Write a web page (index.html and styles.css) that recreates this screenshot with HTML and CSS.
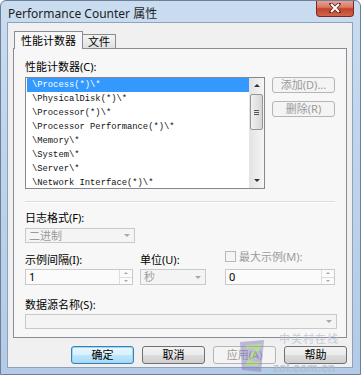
FILE: index.html
```html
<!DOCTYPE html>
<html lang="zh-CN">
<head>
    <meta charset="UTF-8">
    <title>Performance Counter 属性</title>
    <link rel="stylesheet" href="styles.css">
</head>
<body>
<div class="window">
    <!-- Title bar -->
    <div class="titlebar">
        <span class="title">Performance Counter 属性</span>
        <div class="close-btn">
            <svg width="14" height="10" viewBox="0 0 14 10">
                <path d="M3 1 L11 9 M11 1 L3 9" stroke="#5a1a10" stroke-width="3.4" stroke-linecap="round"/>
                <path d="M3 1 L11 9 M11 1 L3 9" stroke="#fff" stroke-width="2"/>
            </svg>
        </div>
    </div>

    <div class="client">
        <!-- Tabs -->
        <div class="tabs">
            <div class="tab active">性能计数器</div>
            <div class="tab">文件</div>
        </div>

        <div class="panel">
            <div class="label">性能计数器(<u>C</u>):</div>
            <div class="counter-row">
                <div class="listbox">
                    <ul class="items">
                        <li class="selected">\Process(*)\*</li>
                        <li>\PhysicalDisk(*)\*</li>
                        <li>\Processor(*)\*</li>
                        <li>\Processor Performance(*)\*</li>
                        <li>\Memory\*</li>
                        <li>\System\*</li>
                        <li>\Server\*</li>
                        <li>\Network Interface(*)\*</li>
                    </ul>
                    <div class="scrollbar">
                        <div class="sb-arrow"><span class="tri up"></span></div>
                        <div class="sb-track">
                            <div class="sb-thumb"><span class="grip"></span></div>
                        </div>
                        <div class="sb-arrow"><span class="tri down"></span></div>
                    </div>
                </div>
                <div class="side-buttons">
                    <div class="btn disabled">添加(D)...</div>
                    <div class="btn disabled">删除(R)</div>
                </div>
            </div>

            <div class="separator"></div>

            <div class="label">日志格式(<u>F</u>):</div>
            <div class="combo disabled format-combo">
                <span class="value">二进制</span>
                <span class="drop"><span class="tri down light"></span></span>
            </div>

            <div class="options">
                <div class="label">示例间隔(<u>I</u>):</div>
                <div class="label">单位(<u>U</u>):</div>
                <div class="label check-label"><span class="checkbox"></span><span>最大示例(<u>M</u>):</span></div>

                <div class="spinner">
                    <span class="value">1</span>
                    <span class="spin">
                        <span class="spin-btn"><span class="tri up tiny light"></span></span>
                        <span class="spin-btn"><span class="tri down tiny light"></span></span>
                    </span>
                </div>
                <div class="combo disabled">
                    <span class="value">秒</span>
                    <span class="drop"><span class="tri down light"></span></span>
                </div>
                <div class="spinner">
                    <span class="value">0</span>
                    <span class="spin">
                        <span class="spin-btn"><span class="tri up tiny light"></span></span>
                        <span class="spin-btn"><span class="tri down tiny light"></span></span>
                    </span>
                </div>
            </div>

            <div class="label source-label">数据源名称(<u>S</u>):</div>
            <div class="combo disabled source-combo">
                <span class="value"></span>
                <span class="drop"><span class="tri down light"></span></span>
            </div>
        </div>

        <!-- Dialog buttons -->
        <div class="footer">
            <div class="btn default">确定</div>
            <div class="btn">取消</div>
            <div class="btn disabled">应用(<u>A</u>)</div>
            <div class="btn">帮助</div>
        </div>
    </div>

    <!-- zol watermark -->
    <svg class="wm-logo" width="24" height="32" viewBox="0 0 24 32">
        <polygon points="0,2 24,0 21,32 2,30" fill="#8a7fc0"/>
        <path d="M6 7 L19 6 L8 24 L19 24" stroke="#7fc24a" stroke-width="4" fill="none"/>
    </svg>
    <span class="wm-cn">中关村在线</span>
    <span class="wm-en">zol.com.cn</span>
</div>
</body>
</html>
```

FILE: styles.css
```css
body {
    margin: 0;
    background: #fff;
    font-family: "Noto Sans", "Noto Sans CJK SC", sans-serif;
    font-size: 11px;
    color: #000;
}

u {
    text-decoration: none;
}

.window {
    position: relative;
    width: 361px;
    height: 375px;
    box-sizing: border-box;
    padding: 0 7px 7px 6px;
    background: linear-gradient(180deg, #c9dcf0 0%, #bfd4ec 40%, #b3cbe6 100%);
    border: 1px solid #6d7f96;
    border-radius: 6px 6px 0 0;
    overflow: hidden;
}

/* ---- title bar ---- */
.titlebar {
    height: 21px;
    display: flex;
    align-items: flex-start;
    justify-content: space-between;
}

.title {
    margin-top: 3px;
    margin-left: 1px;
    font-size: 12px;
    color: #1e1e1e;
}

.close-btn {
    width: 38px;
    height: 17px;
    margin-top: -1px;
    margin-right: -1px;
    box-sizing: border-box;
    display: flex;
    align-items: center;
    justify-content: center;
    background: linear-gradient(180deg, #e9a99b 0%, #d8786a 45%, #c4412a 55%, #d0664a 100%);
    border: 1px solid #7a2a1c;
    border-top: none;
    border-radius: 0 0 4px 4px;
}

/* ---- client area ---- */
.client {
    height: 346px;
    box-sizing: border-box;
    padding: 8px 5px 0 5px;
    background: #f0f0f0;
    border: 1px solid #8da3bd;
}

.tabs {
    display: flex;
    align-items: flex-end;
    height: 17px;
    padding-left: 1px;
}

.tab {
    height: 14px;
    line-height: 14px;
    padding: 0 5px;
    box-sizing: border-box;
    border: 1px solid #898c95;
    border-bottom: none;
    background: linear-gradient(180deg, #f3f3f3, #e1e1e1);
    margin-left: -1px;
}

.tab.active {
    height: 18px;
    line-height: 17px;
    padding: 0 6px;
    background: #f7f7f7;
    position: relative;
    z-index: 1;
    margin-bottom: -1px;
    margin-left: 0;
}

.panel {
    height: 290px;
    box-sizing: border-box;
    padding: 11px 11px 0 11px;
    background: #f7f7f7;
    border: 1px solid #898c95;
}

.label {
    height: 13px;
    line-height: 13px;
    white-space: nowrap;
}

/* ---- counters list ---- */
.counter-row {
    display: flex;
    gap: 7px;
    margin-top: 4px;
}

.listbox {
    width: 240px;
    height: 112px;
    box-sizing: border-box;
    border: 1px solid #828790;
    background: #fff;
    display: flex;
}

.items {
    flex: 1;
    margin: 0;
    padding: 0 0 0 1px;
    list-style: none;
    font-family: "Liberation Mono", monospace;
    font-size: 8.8px;
    color: #111;
}

.items li {
    height: 14px;
    line-height: 14px;
    padding-left: 5px;
    white-space: pre;
}

.items li.selected {
    background: #3399ff;
    color: #fff;
}

.scrollbar {
    width: 15px;
    display: flex;
    flex-direction: column;
    background: linear-gradient(90deg, #e3e3e3, #f5f5f5);
}

.sb-arrow {
    height: 15px;
    display: flex;
    align-items: center;
    justify-content: center;
}

.sb-track {
    flex: 1;
    padding-top: 1px;
}

.sb-thumb {
    height: 36px;
    box-sizing: border-box;
    margin: 0 1px;
    border: 1px solid #979797;
    border-radius: 2px;
    background: linear-gradient(90deg, #f1f1f1, #d6d6d6);
    display: flex;
    align-items: center;
    justify-content: center;
}

.grip {
    width: 5px;
    height: 5px;
    border-top: 1px solid #555;
    border-bottom: 1px solid #555;
    box-sizing: border-box;
    position: relative;
}

.grip::after {
    content: "";
    position: absolute;
    left: 0;
    right: 0;
    top: 1px;
    border-top: 1px solid #555;
}

.tri {
    width: 0;
    height: 0;
    border-left: 3px solid transparent;
    border-right: 3px solid transparent;
}

.tri.up {
    border-bottom: 3px solid #333;
}

.tri.down {
    border-top: 3px solid #333;
}

.tri.tiny {
    border-left-width: 2px;
    border-right-width: 2px;
    border-top-width: 2px;
    border-bottom-width: 2px;
}

.tri.tiny.up {
    border-top: none;
}

.tri.tiny.down {
    border-bottom: none;
}

.tri.light.up {
    border-bottom-color: #a8a8a8;
}

.tri.light.down {
    border-top-color: #a8a8a8;
}

/* ---- buttons ---- */
.side-buttons {
    display: flex;
    flex-direction: column;
    gap: 8px;
}

.btn {
    width: 63px;
    height: 16px;
    box-sizing: border-box;
    line-height: 14px;
    text-align: center;
    border: 1px solid #707070;
    border-radius: 3px;
    background: linear-gradient(180deg, #f2f2f2 0%, #ebebeb 50%, #dddddd 51%, #cfcfcf 100%);
    white-space: nowrap;
}

.btn.disabled {
    color: #9a9a9a;
    border-color: #b5b5b5;
    background: #f4f4f4;
}

.btn.default {
    border-color: #3c7fb1;
    background: linear-gradient(180deg, #eaf6fd 0%, #d9f0fc 50%, #bee6fd 51%, #a7d9f5 100%);
    box-shadow: inset 0 0 0 1px #9ed6f5;
}

.separator {
    height: 1px;
    margin: 12px 0 8px;
    background: #d5dfe5;
    border-bottom: 1px solid #fff;
}

/* ---- combos and spinners ---- */
.combo,
.spinner {
    height: 16px;
    box-sizing: border-box;
    border: 1px solid #c9c9c9;
    display: flex;
    align-items: stretch;
}

.combo {
    height: 15px;
    background: #f4f4f4;
    color: #9a9a9a;
}

.value {
    flex: 1;
    padding-left: 3px;
    line-height: 13px;
}

.drop {
    width: 14px;
    display: flex;
    align-items: center;
    justify-content: center;
}

.format-combo {
    width: 110px;
    margin-top: 4px;
}

.options {
    display: grid;
    grid-template-columns: 108px 66px 110px;
    column-gap: 7px;
    row-gap: 3px;
    margin-top: 10px;
}

.options > :nth-child(3),
.options > :nth-child(6) {
    margin-left: 12px;
    width: 110px;
}

.options .combo {
    height: 16px;
}

.check-label {
    display: flex;
    align-items: center;
    gap: 3px;
    color: #9a9a9a;
    margin-top: -3px;
}

.checkbox {
    width: 9px;
    height: 9px;
    border: 1px solid #b8b8b8;
    background: #f4f4f4;
}

.spinner {
    background: #fbfbfb;
}

.spinner .value {
    line-height: 14px;
}

.spin {
    width: 12px;
    display: flex;
    flex-direction: column;
    border-left: 1px solid #dedede;
}

.spin-btn {
    flex: 1;
    display: flex;
    align-items: center;
    justify-content: center;
}

.spin-btn + .spin-btn {
    border-top: 1px solid #dedede;
}

.source-label {
    margin-top: 13px;
}

.source-combo {
    width: 312px;
    margin-top: 3px;
}

/* ---- footer ---- */
.footer {
    display: flex;
    justify-content: flex-end;
    gap: 8px;
    margin-top: 8px;
}

.footer .btn {
    height: 18px;
    line-height: 16px;
}

/* ---- zol watermark, drawn over the dialog ---- */
.wm-logo {
    position: absolute;
    left: 239px;
    top: 339px;
    opacity: 0.5;
}

.wm-cn {
    position: absolute;
    left: 278px;
    top: 332px;
    font-size: 11px;
    line-height: 12px;
    letter-spacing: 1px;
    color: #b7c2d0;
    opacity: 0.8;
}

.wm-en {
    position: absolute;
    left: 272px;
    top: 361px;
    font-family: "Liberation Sans", sans-serif;
    font-size: 12px;
    line-height: 12px;
    font-weight: bold;
    color: #b0bccb;
    opacity: 0.8;
}
```
